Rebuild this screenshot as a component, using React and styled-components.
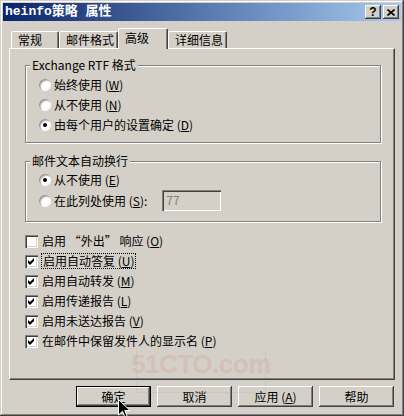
import React from "react";
import styled, { createGlobalStyle } from "styled-components";

const UI_FONT = `"Noto Sans CJK SC", "Liberation Sans", sans-serif`;

const GlobalStyle = createGlobalStyle`
  html, body {
    margin: 0;
    padding: 0;
    background: #d4d0c8;
  }
  body {
    width: 404px;
    height: 416px;
    overflow: hidden;
    font-family: ${UI_FONT};
    font-size: 12px;
    color: #000;
  }
  * {
    box-sizing: border-box;
  }
`;

const Window = styled.div`
  position: relative;
  width: 404px;
  height: 416px;
  padding: 3px;
  display: flex;
  flex-direction: column;
  background: #d4d0c8;
  box-shadow: inset -1px -1px 0 #404040, inset 1px 1px 0 #d4d0c8,
    inset -2px -2px 0 #808080, inset 2px 2px 0 #fff;
`;

const TitleBar = styled.div`
  height: 18px;
  padding: 0 2px;
  display: flex;
  align-items: center;
  background: linear-gradient(to right, #0a246a, #a6caf0);
  color: #fff;
  font: bold 13px/18px "Liberation Mono", "Noto Sans CJK SC", monospace;
`;

const Title = styled.div`
  flex: 1;
  white-space: nowrap;
`;

const CaptionButton = styled.div`
  width: 16px;
  height: 14px;
  margin-left: ${(p) => p.gap || 0}px;
  display: flex;
  align-items: center;
  justify-content: center;
  background: #d4d0c8;
  color: #000;
  font: bold 12px/14px "Liberation Sans", sans-serif;
  box-shadow: inset -1px -1px 0 #404040, inset 1px 1px 0 #fff,
    inset -2px -2px 0 #808080, inset 2px 2px 0 #d4d0c8;
`;

const Body = styled.div`
  flex: 1;
  padding: 7px 6px 0;
  display: flex;
  flex-direction: column;
`;

const TabRow = styled.div`
  height: 20px;
  padding-left: 2px;
  display: flex;
  align-items: flex-end;
`;

const Tab = styled.div`
  position: relative;
  z-index: ${(p) => (p.active ? 1 : 0)};
  width: ${(p) => p.w}px;
  height: ${(p) => (p.active ? 21 : 17)}px;
  margin-bottom: ${(p) => (p.active ? -1 : 0)}px;
  padding: ${(p) => (p.active ? 2 : 1)}px 0 0 6px;
  line-height: 14px;
  white-space: nowrap;
  background: #d4d0c8;
  border-top: 1px solid #fff;
  border-left: 1px solid #fff;
  border-right: 1px solid #404040;
  border-radius: 2px 2px 0 0;
  box-shadow: inset -1px 0 0 #808080;
`;

const Panel = styled.div`
  height: 332px;
  padding: 16px 13px 0 15px;
  border-top: 1px solid #fff;
  border-left: 1px solid #fff;
  border-right: 1px solid #404040;
  border-bottom: 1px solid #404040;
  box-shadow: inset -1px -1px 0 #808080;
`;

const Group = styled.div`
  margin-top: ${(p) => p.mt || 0}px;
  padding: 0 0 ${(p) => p.pb}px 13px;
  border: 1px solid #808080;
  box-shadow: 1px 1px 0 #fff, inset 1px 1px 0 #fff;
`;

const GroupLabel = styled.div`
  width: fit-content;
  margin: -8px 0 0 -9px;
  padding: 0 2px;
  line-height: 14px;
  background: #d4d0c8;
  white-space: nowrap;
`;

const OptionList = styled.div`
  padding-top: ${(p) => p.pt || 0}px;
  margin-top: ${(p) => p.mt || 0}px;
  display: flex;
  flex-direction: column;
`;

const Row = styled.div`
  height: ${(p) => p.h || 20}px;
  display: flex;
  align-items: center;
  gap: ${(p) => p.gap || 3}px;
  white-space: nowrap;
  line-height: 14px;
`;

const Radio = styled.span`
  position: relative;
  width: 12px;
  height: 12px;
  flex: none;
  border-radius: 50%;
  background: #fff;
  box-shadow: inset 1px 1px 0 #9a9893, inset 2px 2px 0 #c9c6bf,
    inset -1px -1px 0 #f4f3f0;

  &::after {
    content: "";
    display: ${(p) => (p.checked ? "block" : "none")};
    position: absolute;
    left: 4px;
    top: 4px;
    width: 4px;
    height: 4px;
    border-radius: 50%;
    background: #000;
  }
`;

const CheckBox = styled.span`
  width: 13px;
  height: 13px;
  flex: none;
  display: flex;
  background: #fff;
  box-shadow: inset 1px 1px 0 #808080, inset 2px 2px 0 #404040,
    inset -1px -1px 0 #fff, inset -2px -2px 0 #d4d0c8;
`;

const Key = styled.span`
  text-decoration: underline;
  text-underline-offset: 1px;
`;

const FocusText = styled.span`
  padding: 0 1px;
  outline: 1px dotted #000;
  outline-offset: 0;
`;

const TextInput = styled.div`
  width: 59px;
  height: 21px;
  margin-left: 12px;
  padding: 3px 0 0 4px;
  line-height: 14px;
  color: #808080;
  background: #d4d0c8;
  box-shadow: inset 1px 1px 0 #808080, inset 2px 2px 0 #404040,
    inset -1px -1px 0 #fff, inset -2px -2px 0 #d4d0c8;
`;

const ButtonRow = styled.div`
  margin-top: 6px;
  padding-right: 1px;
  display: flex;
  justify-content: flex-end;
  gap: 6px;
`;

const Button = styled.div`
  width: 75px;
  height: 21px;
  display: flex;
  align-items: center;
  justify-content: center;
  line-height: 14px;
  background: #d4d0c8;
  border: ${(p) => (p.primary ? "1px solid #000" : "none")};
  box-shadow: inset -1px -1px 0 #404040, inset 1px 1px 0 #fff,
    inset -2px -2px 0 #808080;
`;

/* faint site watermark over the lower panel */
const Watermark = styled.div`
  position: absolute;
  left: 136px;
  top: 349px;
  width: 130px;
  height: 44px;
  display: flex;
  justify-content: center;
  border: 1px solid rgba(150, 150, 150, 0.15);
  border-top: none;
  pointer-events: none;
`;

const WatermarkLogo = styled.div`
  margin-top: 2px;
  font: bold 26px/27px "Liberation Sans", sans-serif;
  letter-spacing: -0.5px;
  color: rgba(215, 120, 120, 0.2);
`;

const Cursor = styled.svg`
  position: absolute;
  left: 118px;
  top: 399px;
`;

const radios1 = [
  { label: "始终使用", key: "W" },
  { label: "从不使用", key: "N" },
  { label: "由每个用户的设置确定", key: "D", checked: true },
];

const checks = [
  { label: "启用 “外出” 响应", key: "O" },
  { label: "启用自动答复", key: "U", checked: true, focus: true },
  { label: "启用自动转发", key: "M", checked: true },
  { label: "启用传递报告", key: "L", checked: true },
  { label: "启用未送达报告", key: "V", checked: true },
  { label: "在邮件中保留发件人的显示名", key: "P", checked: true },
];

const Tick = () => (
  <svg width="13" height="13" viewBox="0 0 13 13">
    <polygon points="3,5 5,7 9,3 9,6 5,10 3,8" fill="#000" />
  </svg>
);

const Label = ({ text, k }) => (
  <span>
    {text} (<Key>{k}</Key>)
  </span>
);

const App = () => {
  return (
    <>
      <GlobalStyle />
      <Window>
        <TitleBar>
          <Title>heinfo策略 属性</Title>
          <CaptionButton>?</CaptionButton>
          <CaptionButton gap={2}>
            <svg width="8" height="7" viewBox="0 0 8 7">
              <path d="M0.5 0.5 L7.5 6.5 M7.5 0.5 L0.5 6.5" stroke="#000" strokeWidth="1.6" />
            </svg>
          </CaptionButton>
        </TitleBar>

        <Body>
          <TabRow>
            <Tab w={48}>常规</Tab>
            <Tab w={59}>邮件格式</Tab>
            <Tab w={50} active>
              高级
            </Tab>
            <Tab w={59}>详细信息</Tab>
          </TabRow>

          <Panel>
            <Group pb={7}>
              <GroupLabel>Exchange RTF 格式</GroupLabel>
              <OptionList pt={3}>
                {radios1.map((r) => (
                  <Row key={r.key}>
                    <Radio checked={r.checked} />
                    <Label text={r.label} k={r.key} />
                  </Row>
                ))}
              </OptionList>
            </Group>

            <Group mt={18} pb={10}>
              <GroupLabel>邮件文本自动换行</GroupLabel>
              <OptionList pt={2}>
                <Row>
                  <Radio checked />
                  <Label text="从不使用" k="E" />
                </Row>
                <Row h={21}>
                  <Radio />
                  <span>
                    在此列处使用 (<Key>S</Key>):
                  </span>
                  <TextInput>77</TextInput>
                </Row>
              </OptionList>
            </Group>

            <OptionList mt={9}>
              {checks.map((c) => (
                <Row key={c.key} gap={4}>
                  <CheckBox>{c.checked && <Tick />}</CheckBox>
                  {c.focus ? (
                    <FocusText>
                      <Label text={c.label} k={c.key} />
                    </FocusText>
                  ) : (
                    <Label text={c.label} k={c.key} />
                  )}
                </Row>
              ))}
            </OptionList>
          </Panel>

          <ButtonRow>
            <Button primary>确定</Button>
            <Button>取消</Button>
            <Button>
              <span>
                应用 (<Key>A</Key>)
              </span>
            </Button>
            <Button>帮助</Button>
          </ButtonRow>
        </Body>

        <Watermark>
          <WatermarkLogo>51CTO.com</WatermarkLogo>
        </Watermark>

        <Cursor width="13" height="20" viewBox="0 0 13 20">
          <path
            d="M0.5 0.5 L0.5 16 L4.5 12.2 L7 18.5 L9.2 17.5 L6.8 11.5 L12 11.5 Z"
            fill="#000"
            stroke="#fff"
            strokeWidth="1"
          />
        </Cursor>
      </Window>
    </>
  );
};

export default App;
